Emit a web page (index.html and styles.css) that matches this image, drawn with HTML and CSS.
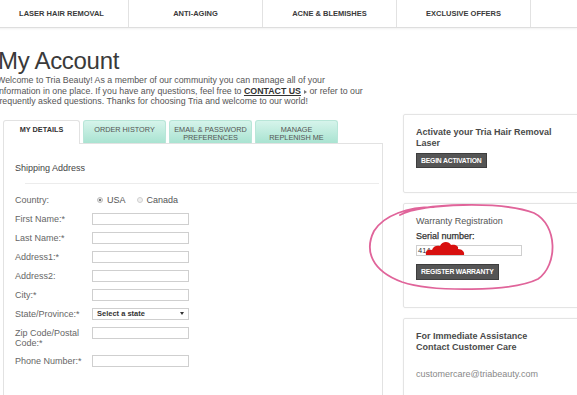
FILE: index.html
```html
<!DOCTYPE html>
<html lang="en">
<head>
    <meta charset="UTF-8">
    <meta name="viewport" content="width=device-width, initial-scale=1.0">
    <title>My Account</title>
    <link rel="stylesheet" href="styles.css">
</head>
<body>
    <nav class="topnav">
        <a href="#">LASER HAIR REMOVAL</a>
        <a href="#">ANTI-AGING</a>
        <a href="#">ACNE &amp; BLEMISHES</a>
        <a href="#">EXCLUSIVE OFFERS</a>
    </nav>
    <div class="page">
        <div class="main-col">
            <h1>My Account</h1>
            <p class="intro">Welcome to Tria Beauty! As a member of our community you can manage all of your information in one place. If you have any questions, feel free to <a href="#">CONTACT US</a><span class="arrow"></span> or refer to our frequently asked questions. Thanks for choosing Tria and welcome to our world!</p>
            <div class="tabs">
                <div class="tab active">MY DETAILS</div>
                <div class="tab">ORDER HISTORY</div>
                <div class="tab">EMAIL &amp; PASSWORD<br>PREFERENCES</div>
                <div class="tab">MANAGE<br>REPLENISH ME</div>
            </div>
            <div class="panel">
                <div class="panel-title">Shipping Address</div>
                <div class="divider"></div>
                <div class="form">
                    <label>Country:</label>
                    <div class="radios">
                        <span class="radio checked"></span><span>USA</span>
                        <span class="radio"></span><span>Canada</span>
                    </div>
                    <label>First Name:*</label>
                    <div class="input"></div>
                    <label>Last Name:*</label>
                    <div class="input"></div>
                    <label>Address1:*</label>
                    <div class="input"></div>
                    <label>Address2:</label>
                    <div class="input"></div>
                    <label>City:*</label>
                    <div class="input"></div>
                    <label>State/Province:*</label>
                    <div class="input select"><span>Select a state</span><span class="caret"></span></div>
                    <label class="two-line">Zip Code/Postal Code:*</label>
                    <div class="input"></div>
                    <label>Phone Number:*</label>
                    <div class="input"></div>
                </div>
            </div>
        </div>
        <div class="side-col">
            <div class="side-box">
                <div class="box-title">Activate your Tria Hair Removal Laser</div>
                <a class="btn" href="#">BEGIN ACTIVATION</a>
            </div>
            <div class="side-box warranty">
                <div class="box-label">Warranty Registration</div>
                <div class="box-sub">Serial number:</div>
                <div class="serial">414
                    <svg class="scribble" width="40" height="15" viewBox="0 0 40 15">
                        <path d="M1 14 C0 10 3 8 7 9 C8 5 12 4 15 5 C17 0 24 0 26 4 C30 3 34 5 33 8 C37 8 40 11 39 14 Z" fill="#d8100f"/>
                    </svg>
                </div>
                <a class="btn" href="#">REGISTER WARRANTY</a>
            </div>
            <div class="side-box care">
                <div class="box-title">For Immediate Assistance<br>Contact Customer Care</div>
                <div class="email">customercare@triabeauty.com</div>
            </div>
        </div>
        <svg class="ring" width="200" height="105" viewBox="0 0 200 105">
            <path d="M38 20 C60 8 140 6 172 18 C196 30 196 70 176 84 C150 97 70 97 40 87 C10 76 2 56 12 36 C22 20 46 12 72 12" fill="none" stroke="#e0649a" stroke-width="1.8" stroke-linecap="round"/>
        </svg>
    </div>
</body>
</html>
```

FILE: styles.css
```css
body {
    margin: 0;
    font-family: 'Liberation Sans', Arial, sans-serif;
    background-color: #fff;
    color: #444;
    overflow: hidden;
}
a {
    text-decoration: none;
    color: inherit;
}
.topnav {
    display: flex;
    height: 27px;
    margin-left: -5px;
    border-bottom: 1px solid #dedede;
    box-shadow: 0 1px 2px rgba(0, 0, 0, 0.06);
}
.topnav a {
    width: 133px;
    flex: none;
    display: flex;
    align-items: center;
    justify-content: center;
    font-size: 7.5px;
    font-weight: bold;
    color: #3a3a3a;
    border-right: 1px solid #e2e2e2;
}
.page {
    position: relative;
    display: flex;
    align-items: flex-start;
}
.main-col {
    width: 383px;
    flex: none;
}
h1 {
    margin: 19px 0 0 -2px;
    font-size: 24px;
    line-height: 28px;
    font-weight: normal;
    letter-spacing: -0.3px;
    color: #3a3a3a;
}
.intro {
    margin: 0 0 0 -3px;
    width: 366px;
    font-size: 8.8px;
    line-height: 10.5px;
    color: #555;
}
.intro a {
    font-weight: bold;
    color: #333;
    text-decoration: underline;
}
.arrow {
    display: inline-block;
    margin-left: 3px;
    border-left: 3px solid #777;
    border-top: 2px solid transparent;
    border-bottom: 2px solid transparent;
}
.tabs {
    display: flex;
    align-items: flex-end;
    gap: 3px;
    height: 23px;
    margin-top: 13px;
    padding-left: 3px;
}
.tab {
    width: 83px;
    height: 23px;
    box-sizing: border-box;
    padding-top: 5px;
    text-align: center;
    font-size: 7.3px;
    line-height: 8px;
    color: #555;
    background: linear-gradient(#d6f4eb, #a9e3d1);
    border: 1px solid #b8e6d8;
    border-bottom: none;
    border-radius: 3px 3px 0 0;
}
.tab.active {
    width: 77px;
    height: 24px;
    margin-bottom: -1px;
    background: #fff;
    border-color: #e2e2e2;
    font-weight: bold;
    color: #333;
    position: relative;
}
.panel {
    margin-left: 3px;
    height: 260px;
    border: 1px solid #e2e2e2;
    border-bottom: none;
}
.panel-title {
    padding: 19px 0 0 11px;
    height: 20px;
    font-size: 9px;
    line-height: 11px;
    color: #444;
}
.divider {
    margin: 0 3px 0 21px;
    border-top: 1px solid #ececec;
}
.form {
    display: grid;
    grid-template-columns: 77px 97px;
    row-gap: 7px;
    padding: 10px 0 0 11px;
    font-size: 9px;
    color: #666;
}
.form label {
    line-height: 12px;
}
.form label.two-line {
    line-height: 10px;
    padding-top: 1px;
}
.input {
    height: 12px;
    border: 1px solid #cfcfcf;
    box-sizing: border-box;
    background: #fff;
}
.select {
    display: flex;
    justify-content: space-between;
    align-items: center;
    padding: 0 4px;
    font-size: 7.5px;
    font-weight: bold;
    color: #333;
}
.caret {
    border-top: 3px solid #333;
    border-left: 2px solid transparent;
    border-right: 2px solid transparent;
}
.radios {
    display: flex;
    align-items: center;
    gap: 4px;
    padding-left: 5px;
    height: 12px;
    color: #555;
}
.radios span + .radio {
    margin-left: 7px;
}
.radio {
    width: 6px;
    height: 6px;
    border-radius: 50%;
    border: 1px solid #d0d0d0;
    background: #f0f0f0;
    box-sizing: border-box;
}
.radio.checked {
    background: radial-gradient(#777 40%, #e8e8e8 50%);
    border-color: #bbb;
}
.side-col {
    margin-left: 20px;
    padding-top: 86px;
    display: flex;
    flex-direction: column;
    gap: 10px;
}
.side-box {
    width: 180px;
    height: 79px;
    box-sizing: border-box;
    padding: 12px 12px 0 12px;
    border: 1px solid #e4e4e4;
    border-radius: 2px;
    box-shadow: 0 0 2px rgba(0, 0, 0, 0.05);
}
.box-title {
    font-size: 9px;
    line-height: 11px;
    font-weight: bold;
    color: #4a4a4a;
}
.btn {
    display: inline-block;
    margin-top: 4px;
    padding: 0 4px;
    height: 13px;
    line-height: 13px;
    font-size: 6.8px;
    font-weight: bold;
    color: #fff;
    background: #555;
    border: 1px solid #3d3d3d;
    letter-spacing: -0.2px;
}
.warranty {
    height: 105px;
    padding-top: 11px;
}
.box-label {
    font-size: 9px;
    line-height: 12px;
    color: #555;
}
.box-sub {
    margin-top: 3px;
    font-size: 9px;
    line-height: 12px;
    color: #333;
    -webkit-text-stroke: 0.25px #333;
}
.serial {
    position: relative;
    margin-top: 3px;
    width: 106px;
    height: 11px;
    box-sizing: border-box;
    border: 1px solid #cfcfcf;
    font-size: 7.5px;
    line-height: 9px;
    padding-left: 1px;
    color: #333;
}
.scribble {
    position: absolute;
    left: 8px;
    top: -5px;
}
.warranty .btn {
    margin-top: 8px;
    height: 14px;
    line-height: 14px;
}
.care {
    height: 90px;
    padding-top: 12px;
}
.email {
    margin-top: 16px;
    font-size: 9px;
    color: #888;
}
.ring {
    position: absolute;
    left: 362px;
    top: 167px;
}
```
